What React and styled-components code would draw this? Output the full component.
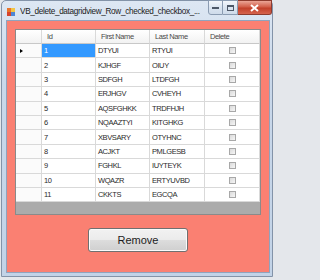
import styled, { createGlobalStyle } from "styled-components";

const rows = [
  { id: 1, first: "DTYUI", last: "RTYUI" },
  { id: 2, first: "KJHGF", last: "OIUY" },
  { id: 3, first: "SDFGH", last: "LTDFGH" },
  { id: 4, first: "ERJHGV", last: "CVHEYH" },
  { id: 5, first: "AQSFGHKK", last: "TRDFHJH" },
  { id: 6, first: "NQAAZTYI", last: "KITGHKG" },
  { id: 7, first: "XBVSARY", last: "OTYHNC" },
  { id: 8, first: "ACJKT", last: "PMLGESB" },
  { id: 9, first: "FGHKL", last: "IUYTEYK" },
  { id: 10, first: "WQAZR", last: "ERTYUVBD" },
  { id: 11, first: "CKKTS", last: "EGCQA" },
];

const sans = `"Liberation Sans", Arial, sans-serif`;

const GlobalStyle = createGlobalStyle`
  html, body {
    margin: 0;
    background: #e4e7eb;
  }
`;

export default function App() {
  return (
    <>
      <GlobalStyle />
      <Window>
        <TitleBar>
          <AppIcon width="8" height="8" viewBox="0 0 8 8">
            <rect x="0" y="0" width="4" height="4" fill="#e8742c" />
            <rect x="4" y="0" width="4" height="4" fill="#f3c443" />
            <rect x="0" y="4" width="4" height="4" fill="#d6452e" />
            <rect x="4" y="4" width="4" height="4" fill="#4d86d6" />
          </AppIcon>
          <Title>VB_delete_datagridview_Row_checked_checkbox_...</Title>
          <Controls>
            <CtrlButton>
              <svg width="7" height="3" viewBox="0 0 7 3">
                <rect x="0" y="1" width="7" height="2" fill="#4d5868" />
              </svg>
            </CtrlButton>
            <CtrlButton>
              <svg width="7" height="6" viewBox="0 0 7 6">
                <rect x="0.5" y="0.5" width="6" height="5" fill="none" stroke="#4d5868" />
                <rect x="0.5" y="0.5" width="6" height="1.5" fill="#4d5868" />
              </svg>
            </CtrlButton>
            <CloseButton>
              <svg width="9" height="8" viewBox="0 0 9 8">
                <path d="M1 1 L8 7 M8 1 L1 7" stroke="#fff" strokeWidth="2" />
              </svg>
            </CloseButton>
          </Controls>
        </TitleBar>
        <Client>
          <DataGrid>
            <GridRow $height={14}>
              <HeaderCell />
              <HeaderCell>Id</HeaderCell>
              <HeaderCell>First Name</HeaderCell>
              <HeaderCell>Last Name</HeaderCell>
              <HeaderCell>Delete</HeaderCell>
            </GridRow>
            {rows.map((row, i) => (
              <GridRow key={row.id} $height={14.4}>
                <RowHeader>{i === 0 && <Arrow />}</RowHeader>
                <Cell $selected={i === 0}>{row.id}</Cell>
                <Cell>{row.first}</Cell>
                <Cell>{row.last}</Cell>
                <CheckCell>
                  <CheckBox />
                </CheckCell>
              </GridRow>
            ))}
          </DataGrid>
          <RemoveButton type="button">Remove</RemoveButton>
        </Client>
      </Window>
    </>
  );
}

const Window = styled.div`
  margin-left: 1px;
  width: 272px;
  height: 277px;
  box-sizing: border-box;
  border: 1px solid #8393a8;
  border-radius: 5px 5px 0 0;
  background: linear-gradient(#dde7f3, #c9d8ea 30%, #c2d3e7);
  padding: 0 2px 3px 4px;
  display: flex;
  flex-direction: column;
`;

const TitleBar = styled.div`
  height: 19px;
  display: flex;
  align-items: flex-start;
`;

const AppIcon = styled.svg`
  margin: 7px 0 0 1px;
  flex-shrink: 0;
`;

const Title = styled.span`
  margin: 6px 0 0 5px;
  min-width: 0;
  overflow: hidden;
  font-family: ${sans};
  font-size: 8.2px;
  letter-spacing: -0.32px;
  color: #1b1b1b;
  white-space: nowrap;
`;

const Controls = styled.div`
  margin: -1px -2px 0 auto;
  display: flex;
  flex-shrink: 0;
  height: 15px;
`;

const CtrlButton = styled.div`
  width: 15px;
  height: 15px;
  box-sizing: border-box;
  border: 1px solid #8b9cb2;
  border-left-width: 0;
  background: linear-gradient(#f3f7fc, #dbe5f1 50%, #cfdbea);
  display: flex;
  align-items: center;
  justify-content: center;

  &:first-child {
    border-left-width: 1px;
    border-bottom-left-radius: 3px;
  }
`;

const CloseButton = styled(CtrlButton)`
  width: 34px;
  border-color: #8d3b2e;
  border-bottom-right-radius: 3px;
  background: linear-gradient(#eba596, #d25e49 45%, #c2402a 55%, #d5644e);
`;

const Client = styled.div`
  flex: 1;
  background: #fa8072;
  border: 1px solid #8fa3bd;
  display: flex;
  flex-direction: column;
  align-items: flex-start;
`;

const DataGrid = styled.div`
  margin: 8px 0 0 8px;
  width: 246px;
  height: 186px;
  box-sizing: border-box;
  border: 1px solid #8a8a8a;
  background: #ababab;
  font-family: ${sans};
  font-size: 7.5px;
  letter-spacing: -0.4px;
`;

const GridRow = styled.div`
  display: grid;
  grid-template-columns: 26px 54px 54px 55px 55px;
  height: ${(p) => p.$height}px;
`;

const HeaderCell = styled.div`
  box-sizing: border-box;
  border-right: 1px solid #d9d9d9;
  border-bottom: 1px solid #c8c8c8;
  background: linear-gradient(#ffffff, #f2f2f2);
  color: #4a4a4a;
  padding-left: 5px;
  display: flex;
  align-items: center;
  white-space: nowrap;
`;

const RowHeader = styled.div`
  box-sizing: border-box;
  border-right: 1px solid #d9d9d9;
  border-bottom: 1px solid #d9d9d9;
  background: #fbfbfb;
  display: flex;
  align-items: center;
  padding-left: 4px;
`;

const Arrow = styled.span`
  width: 0;
  height: 0;
  border-top: 2.5px solid transparent;
  border-bottom: 2.5px solid transparent;
  border-left: 3px solid #000;
`;

const Cell = styled.div`
  box-sizing: border-box;
  border-right: 1px solid #d9d9d9;
  border-bottom: 1px solid #d9d9d9;
  background: ${(p) => (p.$selected ? "#3399ff" : "#ffffff")};
  color: ${(p) => (p.$selected ? "#ffffff" : "#2a2a2a")};
  padding-left: 2px;
  display: flex;
  align-items: center;
  white-space: nowrap;
`;

const CheckCell = styled(Cell)`
  justify-content: center;
  padding-left: 0;
`;

const CheckBox = styled.span`
  width: 7px;
  height: 7px;
  box-sizing: border-box;
  border: 1px solid #a8a8a8;
  background: linear-gradient(135deg, #dadada, #f6f6f6);
`;

const RemoveButton = styled.button`
  align-self: center;
  margin-top: 13px;
  width: 100px;
  height: 24px;
  padding: 0;
  border: 1px solid #707070;
  border-radius: 3px;
  background: linear-gradient(#f2f2f2, #ebebeb 50%, #dddddd 50%, #cfcfcf);
  box-shadow: inset 0 0 0 1px #fbfbfb;
  font-family: ${sans};
  font-size: 11px;
  color: #1c1c1c;
`;
